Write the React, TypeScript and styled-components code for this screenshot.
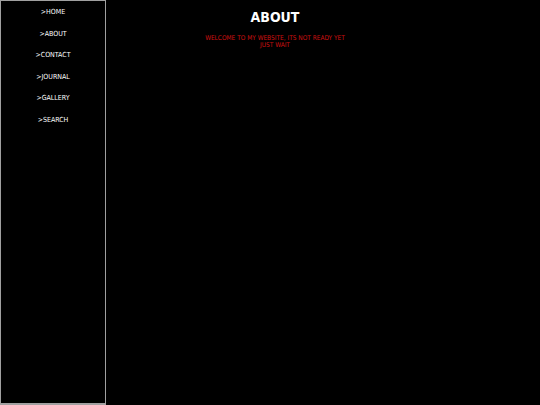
import React from "react";
import styled, { createGlobalStyle } from "styled-components";

const Global = createGlobalStyle`
  html, body { margin: 0; padding: 0; background: #000; }
  body { font-family: "DejaVu Sans Condensed", "DejaVu Sans", sans-serif; font-stretch: condensed; }
`;

const Page = styled.div`
  display: flex;
  width: 540px;
  height: 405px;
  background: #000;
`;

const Sidebar = styled.nav`
  box-sizing: border-box;
  width: 106px;
  height: 405px;
  border: 1px solid #a0a0a0;
  border-bottom-width: 2px;
  display: flex;
  flex-direction: column;
  align-items: center;
  padding-top: 7px;
  gap: 12.5px;
`;

const NavLink = styled.a`
  color: #fff;
  font-size: 7px;
  line-height: 9px;
  text-decoration: none;
  text-align: center;
`;

const Main = styled.main`
  flex: 1;
  display: flex;
  flex-direction: column;
  align-items: center;
  padding-right: 96px;
  padding-top: 9px;
`;

const Title = styled.h1`
  margin: 0;
  color: #fff;
  font-size: 14px;
  line-height: 17px;
  font-weight: 600;
`;

const Message = styled.p`
  margin: 9px 0 0;
  color: #d01010;
  font-size: 6.5px;
  line-height: 7px;
  text-align: center;
`;

const items = ["HOME", "ABOUT", "CONTACT", "JOURNAL", "GALLERY", "SEARCH"];

export default function App() {
  return (
    <>
      <Global />
      <Page>
        <Sidebar>
          {items.map((i) => (
            <NavLink key={i} href="#">&gt;{i}</NavLink>
          ))}
        </Sidebar>
        <Main>
          <Title>ABOUT</Title>
          <Message>
            WELCOME TO MY WEBSITE, ITS NOT READY YET
            <br />
            JUST WAIT
          </Message>
        </Main>
      </Page>
    </>
  );
}
